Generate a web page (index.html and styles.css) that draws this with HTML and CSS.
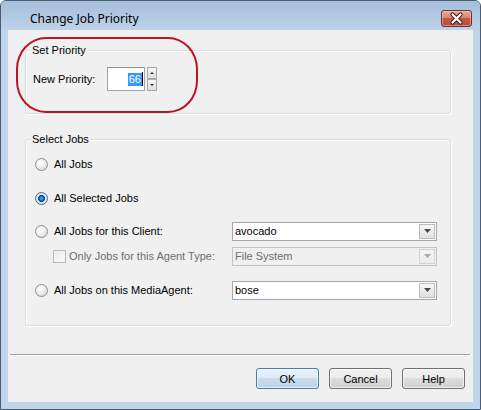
FILE: index.html
```html
<!DOCTYPE html>
<html>
<head>
<meta charset="utf-8">
<link rel="stylesheet" href="styles.css">
</head>
<body>
<div class="window">
  <div class="titlebar">
    <span class="title">Change Job Priority</span>
    <span class="close">
      <svg width="29" height="15" viewBox="0 0 29 15">
        <path d="M10.5 3.5 L18.5 11.5 M18.5 3.5 L10.5 11.5" stroke="#4a1a1a" stroke-width="4.2" stroke-linecap="round"/>
        <path d="M10.5 3.5 L18.5 11.5 M18.5 3.5 L10.5 11.5" stroke="#ffffff" stroke-width="2.2" stroke-linecap="round"/>
      </svg>
    </span>
  </div>
  <div class="client">
    <div class="group group-priority">
      <div class="group-title">Set Priority</div>
      <div class="prio-row">
        <span class="prio-label">New Priority:</span>
        <span class="num-input"><span class="sel">66</span><span class="caret"></span></span>
        <span class="spinner">
          <span class="spin-btn"><svg width="8" height="10" viewBox="0 0 8 10"><path d="M2 6 L4 4 L6 6 Z" fill="#333"/></svg></span>
          <span class="spin-btn"><svg width="8" height="10" viewBox="0 0 8 10"><path d="M2 4 L6 4 L4 6 Z" fill="#333"/></svg></span>
        </span>
      </div>
    </div>

    <div class="group group-jobs">
      <div class="group-title">Select Jobs</div>
      <div class="opt-row row1"><span class="radio"></span><span class="opt-label">All Jobs</span></div>
      <div class="opt-row row2"><span class="radio checked"></span><span class="opt-label">All Selected Jobs</span></div>
      <div class="opt-row row3">
        <span class="radio"></span><span class="opt-label wide">All Jobs for this Client:</span>
        <span class="combo"><span class="combo-text">avocado</span><span class="combo-btn"><svg width="7" height="4" viewBox="0 0 7 4"><path d="M0 0 L7 0 L3.5 4 Z" fill="#4a4a4a"/></svg></span></span>
      </div>
      <div class="opt-row row4 sub">
        <span class="check"></span><span class="opt-label sub-label disabled">Only Jobs for this Agent Type:</span>
        <span class="combo disabled"><span class="combo-text">File System</span><span class="combo-btn"><svg width="7" height="4" viewBox="0 0 7 4"><path d="M0 0 L7 0 L3.5 4 Z" fill="#a8a8a8"/></svg></span></span>
      </div>
      <div class="opt-row row5">
        <span class="radio"></span><span class="opt-label wide">All Jobs on this MediaAgent:</span>
        <span class="combo"><span class="combo-text">bose</span><span class="combo-btn"><svg width="7" height="4" viewBox="0 0 7 4"><path d="M0 0 L7 0 L3.5 4 Z" fill="#4a4a4a"/></svg></span></span>
      </div>
    </div>

    <div class="separator"></div>

    <div class="buttons">
      <span class="btn default">OK</span>
      <span class="btn">Cancel</span>
      <span class="btn">Help</span>
    </div>

    <div class="annotation"></div>
  </div>
</div>
</body>
</html>
```

FILE: styles.css
```css
* { box-sizing: border-box; }
html, body { margin: 0; padding: 0; background: #ffffff; }
body {
  font-family: "Liberation Sans", Arial, sans-serif;
  font-size: 11px;
  color: #000;
}
.window {
  width: 481px;
  height: 410px;
  border: 1px solid #4a5d70;
  border-radius: 6px 6px 0 0;
  background: #bfd5ec;
  overflow: hidden;
}
.titlebar {
  height: 29px;
  display: flex;
  align-items: flex-start;
  background: linear-gradient(to bottom, #a5bed9 0%, #b3cae3 60%, #bcd3ea 100%);
}
.title {
  font-family: "Noto Sans", "Open Sans", sans-serif;
  font-size: 12px;
  line-height: 16px;
  margin: 10px 0 0 29px;
  color: #000;
}
.close {
  margin: 9px 8px 0 auto;
  width: 31px;
  height: 17px;
  border: 1px solid #6d2f2f;
  border-radius: 3px;
  background: linear-gradient(to bottom, #e8aa9c 0%, #d98470 45%, #c55a43 50%, #b94c3a 100%);
  box-shadow: inset 0 0 0 1px rgba(255,220,210,0.45);
  display: flex;
  align-items: center;
  justify-content: center;
}
.close svg { display: block; }
.client {
  position: relative;
  margin: 0 7px;
  width: 465px;
  height: 372px;
  background: #f0f0f0;
  padding-top: 20px;
}
.group {
  border: 1px solid #d5dfe5;
  border-radius: 3px;
  box-shadow: inset 1px 1px 0 #ffffff, 1px 1px 0 #ffffff;
  margin-left: 17px;
  width: 426px;
}
.group-priority { height: 64px; }
.group-jobs { height: 187px; margin-top: 25px; }
.group-title {
  width: fit-content;
  margin: -7px 0 0 5px;
  padding: 0 1px;
  height: 13px;
  line-height: 13px;
  background: #f0f0f0;
}
.prio-row {
  display: flex;
  align-items: center;
  margin-top: 10px;
  padding-left: 7px;
}
.prio-label { width: 74px; }
.num-input {
  width: 38px;
  height: 24px;
  border: 1px solid #a3a6ab;
  border-top-color: #8e9298;
  background: #fff;
  display: flex;
  align-items: center;
  justify-content: flex-end;
  padding-right: 1px;
}
.sel {
  background: #3399ff;
  color: #fff;
  height: 13px;
  line-height: 13px;
  padding: 0 1px 0 1px;
}
.caret {
  width: 1px;
  height: 14px;
  background: #000;
}
.spinner {
  margin-left: 2px;
  width: 10px;
  height: 24px;
  display: flex;
  flex-direction: column;
}
.spin-btn {
  height: 12px;
  border: 1px solid #a9a9a9;
  background: linear-gradient(to bottom, #f6f6f6, #dedede);
  display: flex;
  align-items: center;
  justify-content: center;
}
.spin-btn svg { display: block; }
.opt-row {
  display: flex;
  align-items: center;
  height: 20px;
  padding-left: 9px;
}
.row1 { margin-top: 8px; }
.row2 { margin-top: 14px; }
.row3 { margin-top: 13px; }
.row4 { margin-top: 5px; }
.row5 { margin-top: 14px; }
.opt-row.sub { padding-left: 27px; }
.radio {
  width: 13px;
  height: 13px;
  border-radius: 50%;
  border: 1px solid #8c8e91;
  background: radial-gradient(circle at 40% 35%, #ffffff 0%, #eeeeee 45%, #cfcfcf 100%);
  margin-right: 6px;
  flex: none;
}
.radio.checked {
  border-color: #3a6d9c;
  background: radial-gradient(circle at 50% 50%, #6bb6ef 0, #1f6cb4 2px, #0f4682 3.2px, #d9e4ee 3.8px, #f2f2f2 100%);
}
.check {
  width: 13px;
  height: 13px;
  border: 1px solid #b9b9b9;
  background: linear-gradient(135deg, #e9e9e9, #fbfbfb);
  box-shadow: inset 0 0 0 1px #f4f4f4;
  margin-right: 3px;
  flex: none;
}
.opt-label.wide { width: 178px; }
.opt-label.sub-label { width: 163px; }
.disabled { color: #6d6d6d; }
.combo {
  display: flex;
  width: 205px;
  height: 19px;
  border: 1px solid #a3a7ad;
  background: #fff;
}
.combo.disabled {
  background: #f0f0f0;
  border-color: #c3c3c3;
  color: #6d6d6d;
}
.combo-text {
  flex: 1;
  padding-left: 2px;
  line-height: 17px;
}
.combo-btn {
  width: 16px;
  margin: 1px;
  border: 1px solid #bcbcbc;
  background: linear-gradient(to bottom, #f7f7f7, #e1e1e1);
  display: flex;
  align-items: center;
  justify-content: center;
}
.combo.disabled .combo-btn {
  border-color: #d3d3d3;
  background: linear-gradient(to bottom, #f4f4f4, #ececec);
}
.combo-btn svg { display: block; }
.separator {
  margin: 28px 0 0 2px;
  width: 460px;
  height: 2px;
  border-top: 1px solid #a0a0a0;
  border-bottom: 1px solid #ffffff;
}
.buttons {
  display: flex;
  justify-content: flex-end;
  gap: 10px;
  margin-top: 12px;
  padding-right: 8px;
}
.btn {
  width: 63px;
  height: 21px;
  border: 1px solid #707070;
  border-radius: 3px;
  background: linear-gradient(to bottom, #f2f2f2 0%, #ebebeb 49%, #dddddd 50%, #cfcfcf 100%);
  box-shadow: inset 0 0 0 1px rgba(255,255,255,0.7);
  display: flex;
  align-items: center;
  justify-content: center;
}
.btn.default {
  border-color: #3c7fb1;
  background: linear-gradient(to bottom, #eaf3fa 0%, #dde9f3 49%, #c9dcec 50%, #bcd3e6 100%);
}
.annotation {
  position: absolute;
  left: 8px;
  top: 7px;
  width: 182px;
  height: 76px;
  border: 2px solid #c1121f;
  border-radius: 30px / 32px;
  pointer-events: none;
}
```
